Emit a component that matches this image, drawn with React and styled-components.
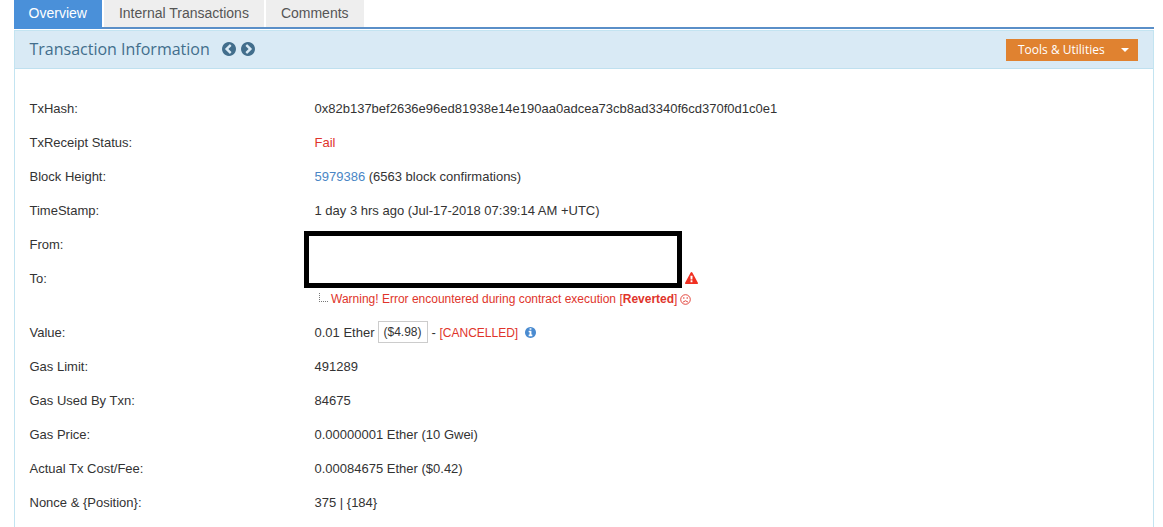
import React from 'react';
import styled, { createGlobalStyle } from 'styled-components';

const GlobalStyle = createGlobalStyle`
  * {
    box-sizing: border-box;
  }

  body {
    margin: 0;
    overflow: hidden;
    background: #fff;
    color: #333;
    font-family: "Liberation Sans", Arial, sans-serif;
    font-size: 13px;
  }
`;

const Page = styled.main`
  display: flex;
  flex-direction: column;
  height: 527px;
  padding: 0 9px 0 14px;
`;

const Tabs = styled.nav`
  display: flex;
  align-items: flex-start;
  gap: 2px;
  flex: none;
  height: 29px;
  border-bottom: 2px solid #5a8fc8;
`;

const Tab = styled.a`
  height: ${({ $active }) => ($active ? '29px' : '27px')};
  padding: 0 15.4px 0 14.6px;
  line-height: 27px;
  font-size: 14px;
  white-space: nowrap;
  color: ${({ $active }) => ($active ? '#fff' : '#555')};
  background: ${({ $active }) => ($active ? '#4a90d9' : '#eee')};
`;

const Panel = styled.section`
  flex: 1;
  border: 1px solid #c3e4f1;
  border-bottom: none;
  margin-top: 1px;
`;

const PanelHeader = styled.header`
  display: flex;
  align-items: center;
  height: 38px;
  padding: 0 15px 0 14.5px;
  background: #d9eaf5;
  border-bottom: 1px solid #bfe0ef;
  color: #426e8c;
`;

const Title = styled.h1`
  margin: 0 12px 2px 0;
  font-family: "Open Sans", sans-serif;
  font-size: 16px;
  font-weight: 400;
  line-height: 22px;
`;

const Pager = styled.div`
  display: flex;
  gap: 5px;
  margin-bottom: 1px;

  svg:last-child {
    transform: scaleX(-1);
  }
`;

const ToolsButton = styled.button`
  display: flex;
  align-items: center;
  justify-content: space-between;
  width: 132px;
  height: 22px;
  margin-left: auto;
  padding: 0 9px 0 12px;
  border: none;
  background: #e08230;
  color: #fff;
  font-family: "Open Sans", sans-serif;
  font-size: 12px;
`;

const Caret = styled.span`
  border-top: 4px solid #fff;
  border-left: 4px solid transparent;
  border-right: 4px solid transparent;
`;

const Details = styled.dl`
  margin: 0;
  padding: 23px 15px 0 14.5px;
`;

const Row = styled.div`
  display: grid;
  grid-template-columns: 285px 1fr;
  line-height: 34px;
`;

const Label = styled.dt`
  white-space: nowrap;
`;

const Value = styled.dd`
  position: relative;
  margin: 0;
  white-space: nowrap;
`;

const Link = styled.a`
  color: #4a86c5;
`;

const Danger = styled.span`
  color: #e0342b;
  font-size: ${({ $small }) => ($small ? '12px' : 'inherit')};
`;

const Redaction = styled.div`
  position: absolute;
  top: 3px;
  left: -10.5px;
  z-index: 1;
  width: 378px;
  height: 57px;
  border: 5px solid #000;
  background: #fff;
`;

const Recipient = styled.div`
  display: flex;
  align-items: center;
  height: 34px;
  padding: 0 0 2px 370px;
  color: #f03022;
`;

const Warning = styled.div`
  display: flex;
  align-items: center;
  height: 20px;
  padding: 0 0 14px 4.5px;
  line-height: 14px;
  font-size: 12px;
  color: #e0342b;

  svg {
    margin-left: 3px;
  }
`;

const Branch = styled.span`
  width: 9px;
  height: 9px;
  margin: 0 3px 3px 0;
  border-left: 1px dotted #777;
  border-bottom: 1px dotted #777;
`;

const Amount = styled.div`
  display: flex;
  align-items: center;
  height: 34px;
  line-height: 20px;
`;

const Fiat = styled.span`
  height: 22px;
  margin: 0 4px 2px 3px;
  padding: 0 5px;
  border: 1px solid #ccc;
  line-height: 20px;
  font-size: 12px;
`;

const InfoMark = styled.span`
  display: flex;
  margin: 0 0 1px 7px;
  color: #4a8bd0;
`;

const Disc = 'm627-499q0 209-103 385.5t-279.5 279.5-385.5 103-385.5-103-279.5-279.5-103-385.5 103-385.5 279.5-279.5 385.5-103 385.5 103 279.5 279.5 103 385.5z';

const ChevronIcon = () => (
  <svg width="14" height="14" viewBox="128 128 1536 1536" fill="currentColor">
    <path d={`M1037 1395l102-102q19-19 19-45t-19-45l-307-307 307-307q19-19 19-45t-19-45l-102-102q-19-19-45-19t-45 19l-454 454q-19 19-19 45t19 45l454 454q19 19 45 19t45-19z${Disc}`} />
  </svg>
);

const AlertIcon = () => (
  <svg width="13" height="13" viewBox="0 0 1792 1792" fill="currentColor">
    <path d="M1024 1375v-190q0-14-9.5-23.5t-22.5-9.5h-192q-13 0-22.5 9.5t-9.5 23.5v190q0 14 9.5 23.5t22.5 9.5h192q13 0 22.5-9.5t9.5-23.5zm-2-374l18-459q0-12-10-19-13-11-24-11h-220q-11 0-24 11-10 7-10 21l17 457q0 10 10 16.5t24 6.5h185q14 0 23.5-6.5t10.5-16.5zm-14-934l768 1408q35 63-2 126-17 29-46.5 46t-63.5 17h-1536q-34 0-63.5-17t-46.5-46q-37-63-2-126l768-1408q17-31 47-49t65-18 65 18 47 49z" />
  </svg>
);

const InfoIcon = () => (
  <svg width="11" height="11" viewBox="128 128 1536 1536" fill="currentColor">
    <path d="M1152 1376v-160q0-14-9-23t-23-9h-96v-512q0-14-9-23t-23-9h-320q-14 0-23 9t-9 23v160q0 14 9 23t23 9h96v320h-96q-14 0-23 9t-9 23v160q0 14 9 23t23 9h448q14 0 23-9t9-23zm-128-896v-160q0-14-9-23t-23-9h-192q-14 0-23 9t-9 23v160q0 14 9 23t23 9h192q14 0 23-9t9-23zm640 416q0 209-103 385.5t-279.5 279.5-385.5 103-385.5-103-279.5-279.5-103-385.5 103-385.5 279.5-279.5 385.5-103 385.5 103 279.5 279.5 103 385.5z" />
  </svg>
);

const FrownIcon = () => (
  <svg width="11" height="11" viewBox="0 0 11 11" fill="none" stroke="currentColor" strokeWidth="0.9">
    <circle cx="5.5" cy="5.5" r="4.8" />
    <path d="M3 8.1Q5.5 5.4 8 8.1" />
    <circle cx="3.8" cy="4" r="0.75" fill="currentColor" stroke="none" />
    <circle cx="7.2" cy="4" r="0.75" fill="currentColor" stroke="none" />
  </svg>
);

const rows = [
  { label: 'TxHash:', value: '0x82b137bef2636e96ed81938e14e190aa0adcea73cb8ad3340f6cd370f0d1c0e1' },
  { label: 'TxReceipt Status:', value: <Danger>Fail</Danger> },
  { label: 'Block Height:', value: <><Link>5979386</Link> (6563 block confirmations)</> },
  { label: 'TimeStamp:', value: '1 day 3 hrs ago (Jul-17-2018 07:39:14 AM +UTC)' },
  { label: 'From:', value: <Redaction /> },
  {
    label: 'To:',
    value: (
      <>
        <Recipient><AlertIcon /></Recipient>
        <Warning>
          <Branch />
          <span>Warning! Error encountered during contract execution [<b>Reverted</b>]</span>
          <FrownIcon />
        </Warning>
      </>
    ),
  },
  {
    label: 'Value:',
    value: (
      <Amount>
        <span>0.01 Ether</span>
        <Fiat>($4.98)</Fiat>
        <span>-&nbsp;<Danger $small>[CANCELLED]</Danger></span>
        <InfoMark><InfoIcon /></InfoMark>
      </Amount>
    ),
  },
  { label: 'Gas Limit:', value: '491289' },
  { label: 'Gas Used By Txn:', value: '84675' },
  { label: 'Gas Price:', value: '0.00000001 Ether (10 Gwei)' },
  { label: 'Actual Tx Cost/Fee:', value: '0.00084675 Ether ($0.42)' },
  { label: 'Nonce & {Position}:', value: '375 | {184}' },
];

const App = () => {
  return (
    <>
      <GlobalStyle />
      <Page>
        <Tabs>
          <Tab $active>Overview</Tab>
          <Tab>Internal Transactions</Tab>
          <Tab>Comments</Tab>
        </Tabs>
        <Panel>
          <PanelHeader>
            <Title>Transaction Information</Title>
            <Pager>
              <ChevronIcon />
              <ChevronIcon />
            </Pager>
            <ToolsButton>
              Tools &amp; Utilities
              <Caret />
            </ToolsButton>
          </PanelHeader>
          <Details>
            {rows.map((row) => (
              <Row key={row.label}>
                <Label>{row.label}</Label>
                <Value>{row.value}</Value>
              </Row>
            ))}
          </Details>
        </Panel>
      </Page>
    </>
  );
};

export default App;
